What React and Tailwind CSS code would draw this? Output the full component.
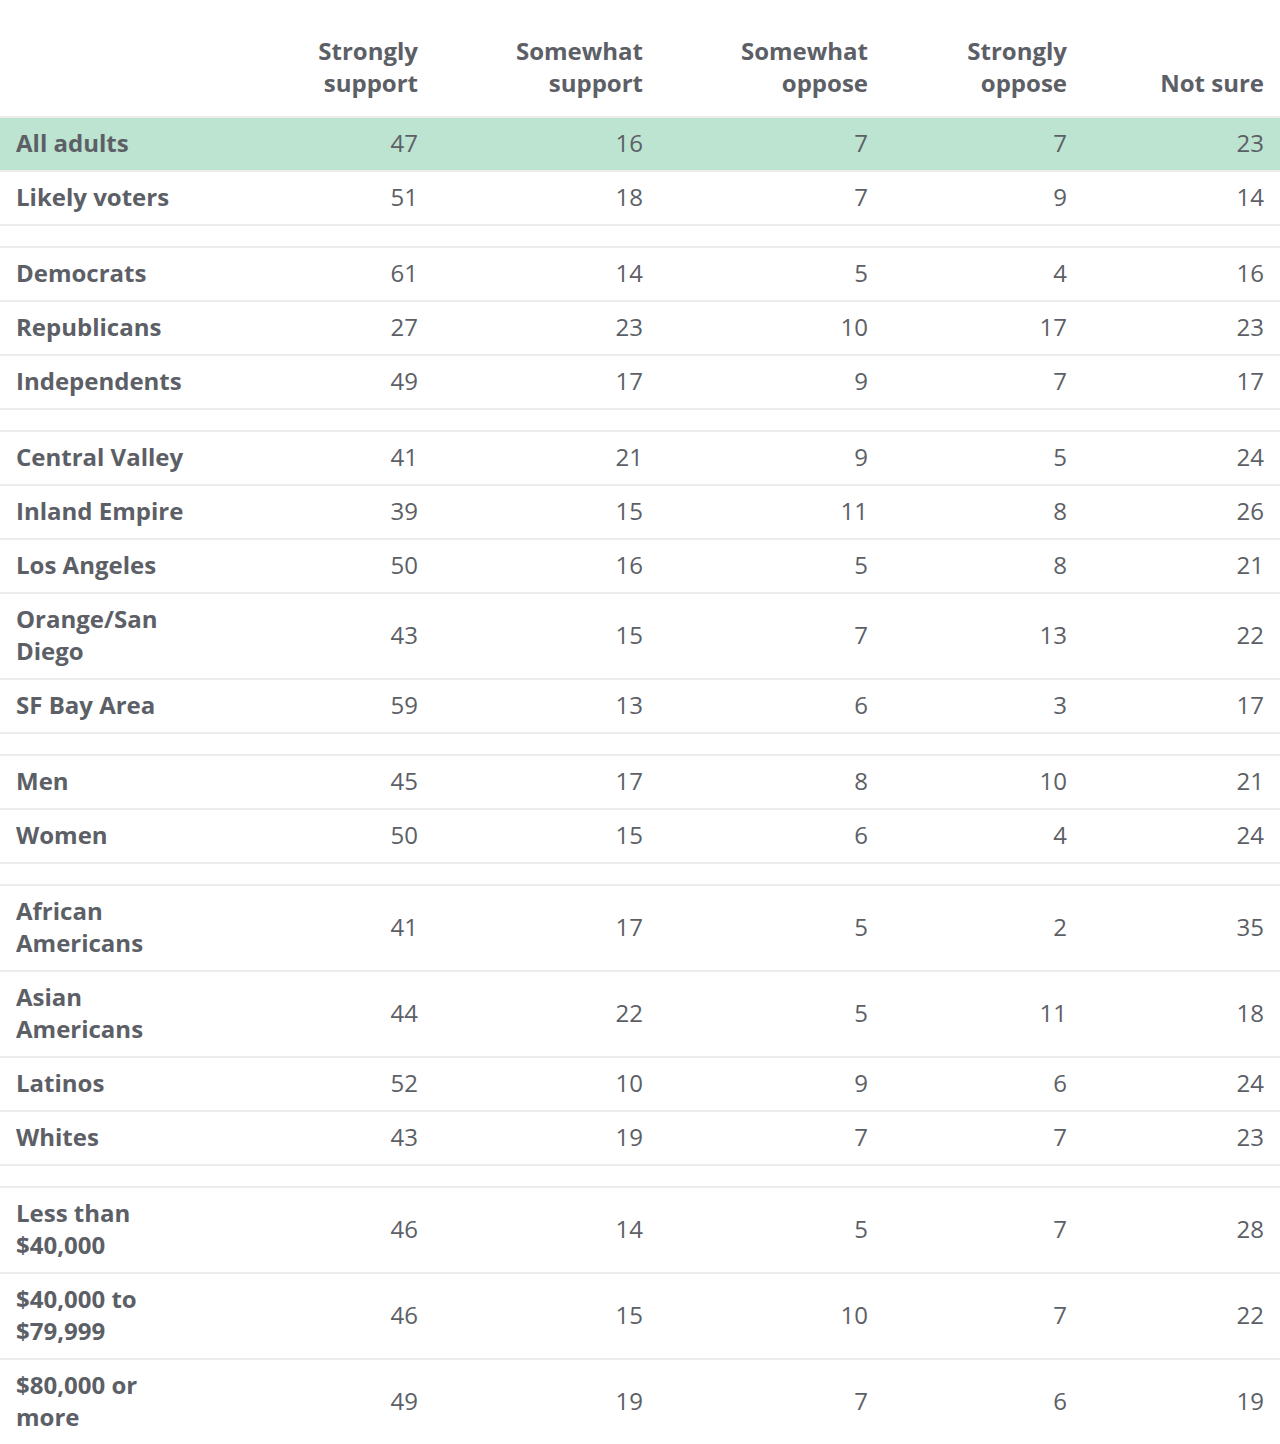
import React from 'react';

const columns = [
    ['Strongly', 'support'],
    ['Somewhat', 'support'],
    ['Somewhat', 'oppose'],
    ['Strongly', 'oppose'],
    ['Not sure'],
];

// null marks a blank spacer row between groups
const rows = [
    { label: ['All adults'], values: [47, 16, 7, 7, 23], highlight: true },
    { label: ['Likely voters'], values: [51, 18, 7, 9, 14] },
    null,
    { label: ['Democrats'], values: [61, 14, 5, 4, 16] },
    { label: ['Republicans'], values: [27, 23, 10, 17, 23] },
    { label: ['Independents'], values: [49, 17, 9, 7, 17] },
    null,
    { label: ['Central Valley'], values: [41, 21, 9, 5, 24] },
    { label: ['Inland Empire'], values: [39, 15, 11, 8, 26] },
    { label: ['Los Angeles'], values: [50, 16, 5, 8, 21] },
    { label: ['Orange/San', 'Diego'], values: [43, 15, 7, 13, 22] },
    { label: ['SF Bay Area'], values: [59, 13, 6, 3, 17] },
    null,
    { label: ['Men'], values: [45, 17, 8, 10, 21] },
    { label: ['Women'], values: [50, 15, 6, 4, 24] },
    null,
    { label: ['African', 'Americans'], values: [41, 17, 5, 2, 35] },
    { label: ['Asian', 'Americans'], values: [44, 22, 5, 11, 18] },
    { label: ['Latinos'], values: [52, 10, 9, 6, 24] },
    { label: ['Whites'], values: [43, 19, 7, 7, 23] },
    null,
    { label: ['Less than', '$40,000'], values: [46, 14, 5, 7, 28] },
    { label: ['$40,000 to', '$79,999'], values: [46, 15, 10, 7, 22] },
    { label: ['$80,000 or', 'more'], values: [49, 19, 7, 6, 19] },
];

const grid = 'grid grid-cols-[209px_225px_225px_225px_199px_197px]';

const App = () => {
    return (
        <div className="w-[1280px] bg-white text-[24px] leading-[32px] text-[#5c6066] font-['Open_Sans','Lato',sans-serif]">
            {/* Header */}
            <div className={`${grid} h-[118px] border-b-2 border-[#ececec]`}>
                <div />
                {columns.map((col, i) => (
                    <div key={i} className="flex flex-col justify-end items-end pr-4 pb-[17px] font-bold">
                        {col.map((line, j) => (
                            <span key={j} className="whitespace-nowrap">{line}</span>
                        ))}
                    </div>
                ))}
            </div>

            {rows.map((row, idx) => {
                if (!row) {
                    return <div key={idx} className="h-[22px] border-b-2 border-[#ececec]" />;
                }
                const isLast = idx === rows.length - 1;
                return (
                    <div
                        key={idx}
                        className={`${grid} items-center pt-[9px] pb-[11px] ${isLast ? '' : 'border-b-2 border-[#ececec]'} ${row.highlight ? 'bg-[#bde3d1]' : ''}`}
                    >
                        <div className="pl-4 font-bold">
                            {row.label.map((line, j) => (
                                <div key={j} className="whitespace-nowrap">{line}</div>
                            ))}
                        </div>
                        {row.values.map((v, j) => (
                            <div key={j} className="text-right pr-4">{v}</div>
                        ))}
                    </div>
                );
            })}
        </div>
    );
};

export default App;
